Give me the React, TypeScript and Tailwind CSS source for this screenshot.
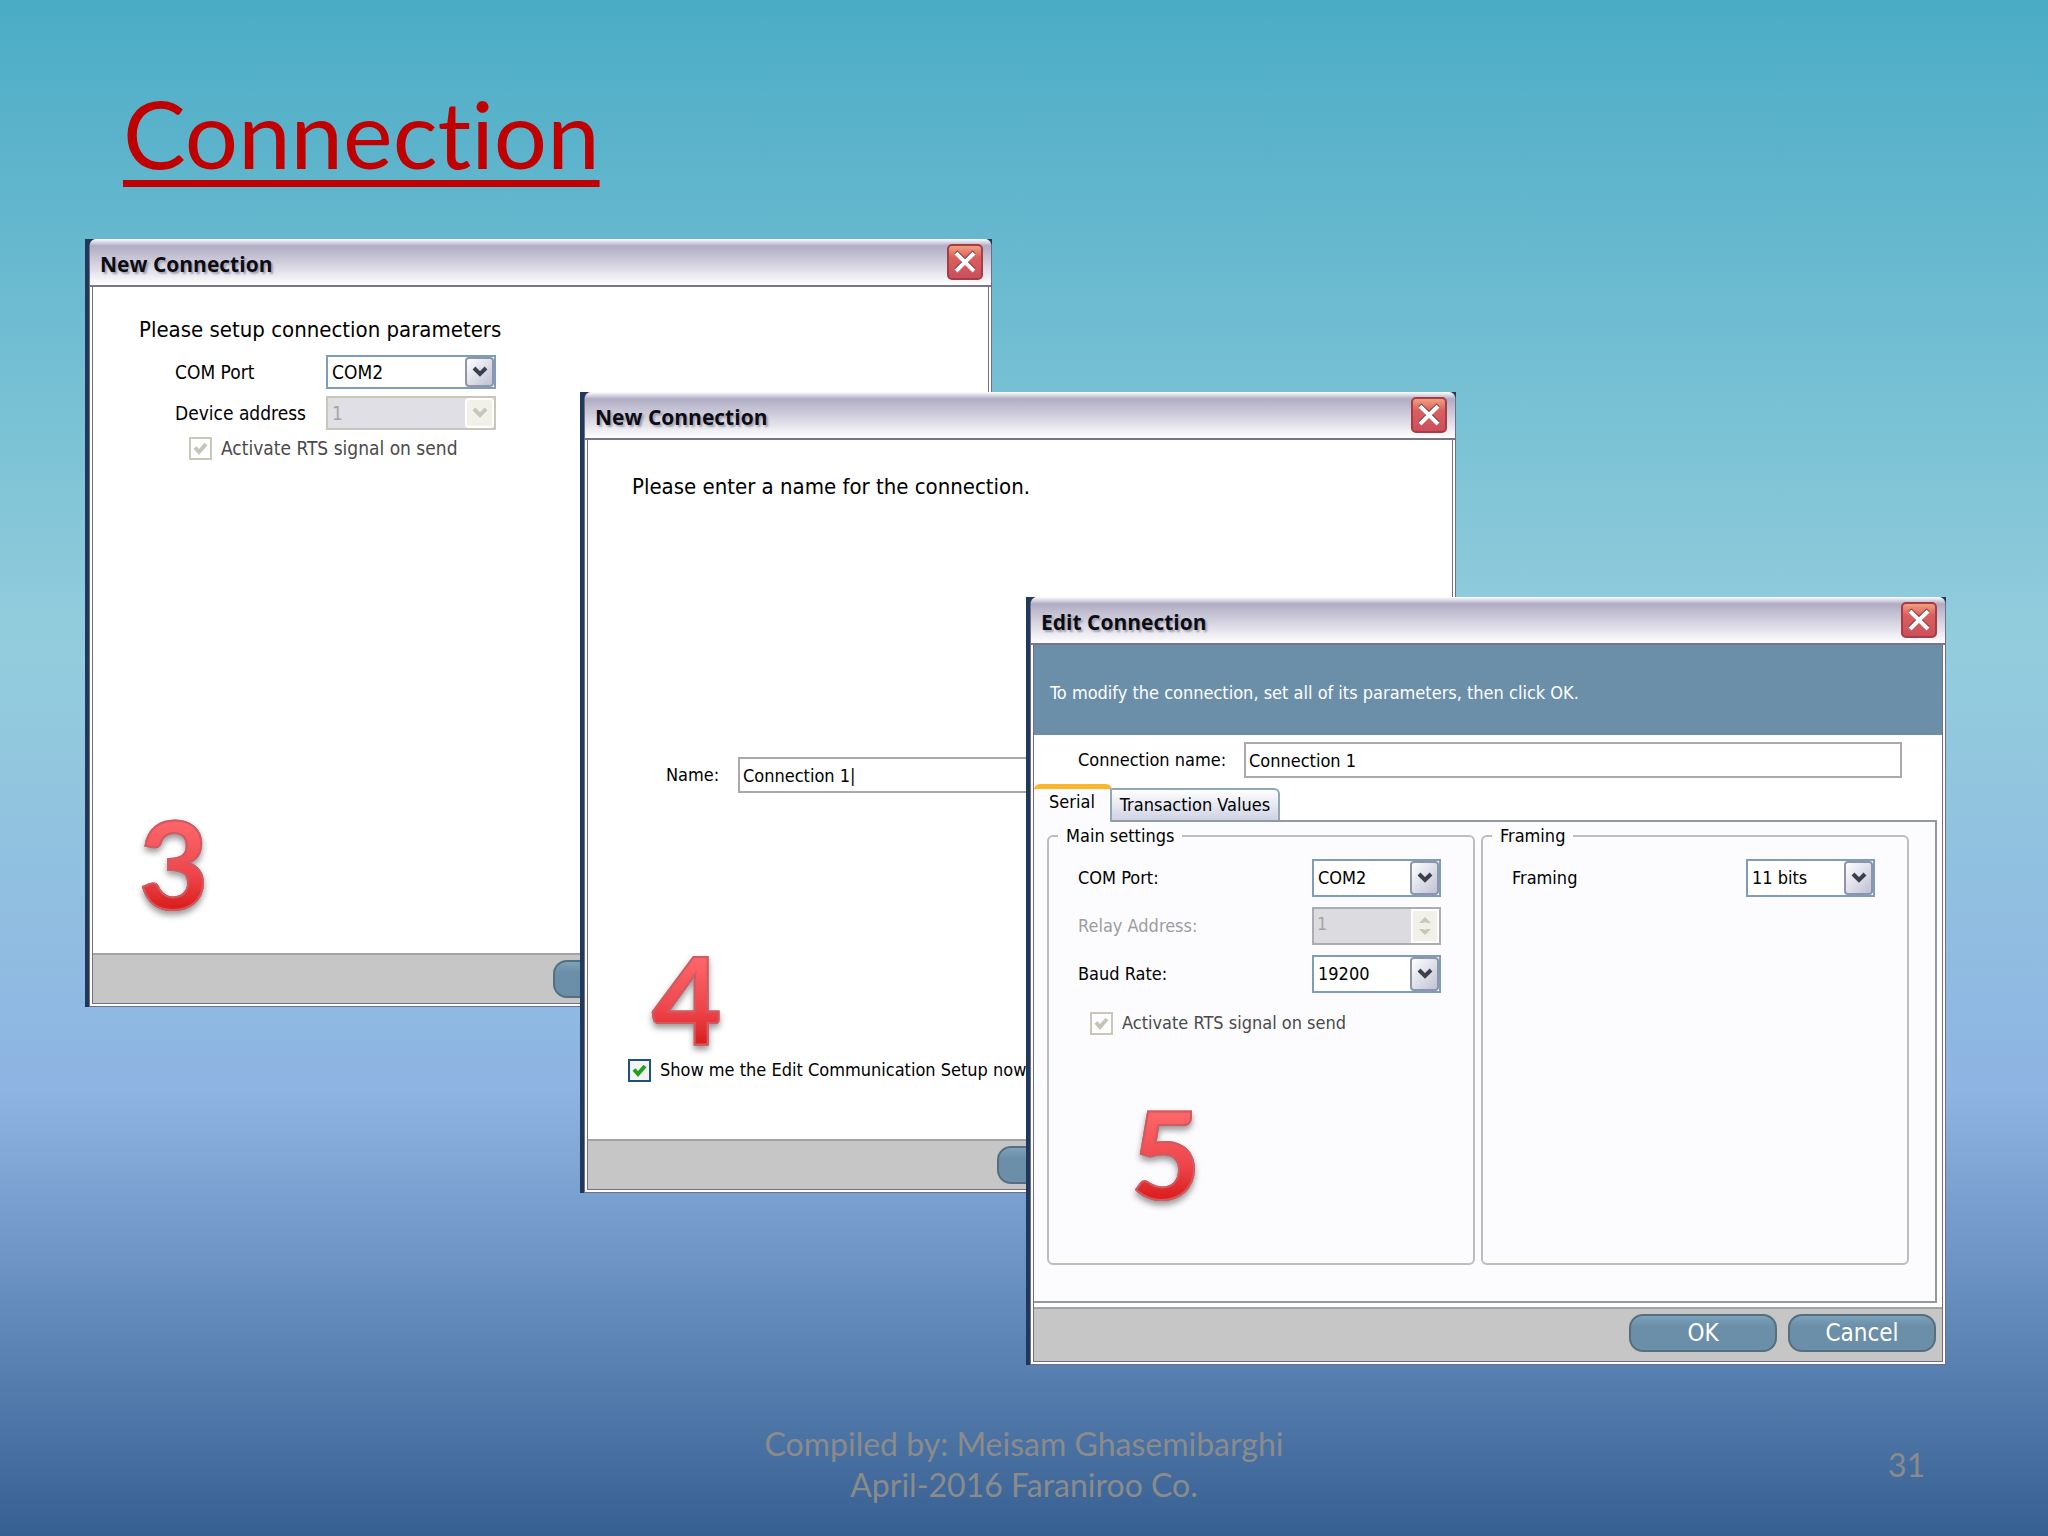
import { useId, type ReactNode } from 'react';
import { clsx } from 'clsx';

interface WindowProps {
  title: string;
  className: string;
  children: ReactNode;
}

function Window({ title, className, children }: WindowProps) {
  return (
    <section
      aria-label={title}
      className={clsx(
        'absolute flex flex-col border-l-4 border-[#20395a] bg-[#20395a] font-[DejaVu_Sans_Condensed,DejaVu_Sans,sans-serif] leading-6 text-black',
        className
      )}
    >
      <div className="flex min-h-0 flex-1 flex-col rounded-t-lg border-x border-b border-[#6f6c8c] bg-white">
        <header className="flex h-12 shrink-0 items-center justify-between rounded-t-md border-b-2 border-[#77748f] bg-linear-to-b from-white via-[#b0adc4] via-15% to-white pr-2 pl-[10px]">
          <h2 className="pt-1 font-[Open_Sans,sans-serif] text-[21px] font-bold text-[#0c0c14] [text-shadow:2px_2px_2px_#a0a0b0]">
            {title}
          </h2>
          <button
            type="button"
            aria-label="Close"
            className="flex size-9 items-center justify-center rounded-[5px] border-2 border-[#a93b47] bg-linear-to-b from-[#f0a080] via-[#d9605f] via-35% to-[#cb4f5c]"
          >
            <svg viewBox="0 0 24 24" className="size-6" fill="none">
              <path d="M3 2 21 20M21 2 3 20" stroke="#5c1a20" strokeWidth="4" />
              <path d="M3 3 21 21M21 3 3 21" stroke="#fff" strokeWidth="4" />
            </svg>
          </button>
        </header>
        <div className="mx-[2px] mb-[2px] flex min-h-0 flex-1 flex-col overflow-hidden border-x border-b border-[#6f6c8c] bg-white">
          {children}
        </div>
      </div>
    </section>
  );
}

interface DropdownProps {
  id: string;
  value: string;
  disabled?: boolean;
  className?: string;
}

function Dropdown({ id, value, disabled, className }: DropdownProps) {
  return (
    <div className={clsx('relative', className)}>
      <select
        id={id}
        defaultValue={value}
        disabled={disabled}
        className={clsx(
          'h-full w-full appearance-none border-2 pl-1 opacity-100',
          disabled
            ? 'border-[#c9c7ba] bg-[#dfdfe5] text-[#a5a5a0]'
            : 'border-[#7f9db9] bg-white text-black'
        )}
      >
        <option>{value}</option>
      </select>
      <span
        className={clsx(
          'pointer-events-none absolute inset-y-[2px] right-[2px] flex w-[29px] items-center justify-center rounded-sm border-2',
          disabled
            ? 'border-white bg-[#f1f1ea]'
            : 'border-[#8f95a8] bg-linear-to-br from-white to-[#bfc2d4]'
        )}
      >
        <svg viewBox="0 0 16 12" className="h-3 w-4" fill="none">
          <path
            d="M2 2 8 8 14 2"
            stroke={disabled ? '#c9c7ba' : '#3c3f4e'}
            strokeWidth="4"
          />
        </svg>
      </span>
    </div>
  );
}

interface CheckFieldProps {
  label: string;
  disabled?: boolean;
  className?: string;
}

function CheckField({ label, disabled, className }: CheckFieldProps) {
  const id = useId();
  return (
    <div className={clsx('flex items-center gap-[9px]', className)}>
      <span className="grid size-[23px] shrink-0">
        <input
          id={id}
          type="checkbox"
          defaultChecked
          disabled={disabled}
          className={clsx(
            'col-start-1 row-start-1 size-[23px] appearance-none border-2',
            disabled ? 'border-[#c9c7ba] bg-white' : 'border-[#1c5180] bg-[#f3f3f0]'
          )}
        />
        <svg
          viewBox="0 0 23 23"
          className="pointer-events-none col-start-1 row-start-1 size-[23px]"
          fill="none"
        >
          <path
            d="M6 10.5 10 15 17 7"
            stroke={disabled ? '#c5c4bb' : '#21a121'}
            strokeWidth="4"
          />
        </svg>
      </span>
      <label
        htmlFor={id}
        className={clsx('whitespace-nowrap', disabled && 'text-[#4a4a4a]')}
      >
        {label}
      </label>
    </div>
  );
}

function StepNumber({ value, className }: { value: number; className?: string }) {
  return (
    <span
      className={clsx(
        'bg-linear-to-b from-[#fb6468] from-20% via-[#ee444a] via-60% to-[#dc2020] to-85% bg-clip-text font-[Lato,sans-serif] text-[120px] leading-[120px] font-bold text-transparent drop-shadow-[0_4px_3px_rgba(0,0,0,0.4)] [-webkit-text-stroke:2px_#cf5a62]',
        className
      )}
    >
      {value}
    </span>
  );
}

function Footer({ children }: { children?: ReactNode }) {
  return (
    <footer className="flex shrink-0 items-start justify-end gap-[11px] border-t-2 border-[#a3a3a3] bg-[#c6c6c6] px-[6px] py-[5px]">
      {children}
    </footer>
  );
}

function ActionButton({ children, className }: { children?: ReactNode; className?: string }) {
  return (
    <button
      type="button"
      className={clsx(
        'h-[38px] w-[148px] rounded-[14px] border-2 border-[#566f7f] bg-linear-to-b from-[#7ba3bb] to-[#6b8fa8] to-30% text-[24px] text-white',
        className
      )}
    >
      {children}
    </button>
  );
}

function PortWindow() {
  return (
    <Window
      title="New Connection"
      className="top-[239px] left-[85px] h-[768px] w-[907px] text-[19px]"
    >
      <div className="flex flex-1 flex-col pt-7 pl-[46px]">
        <p className="text-[22px] leading-[30px]">Please setup connection parameters</p>
        <div className="grid grid-cols-[151px_170px] items-center gap-y-[7px] pt-[10px] pl-9">
          <label htmlFor="port">COM Port</label>
          <Dropdown id="port" value="COM2" className="h-[34px]" />
          <label htmlFor="device">Device address</label>
          <Dropdown id="device" value="1" disabled className="h-[34px]" />
        </div>
        <CheckField label="Activate RTS signal on send" disabled className="pt-[6px] pl-[50px]" />
        <StepNumber value={3} className="mt-auto mb-[30px] self-start" />
      </div>
      <Footer>
        <ActionButton className="mr-[281px]" />
      </Footer>
    </Window>
  );
}

function NameWindow() {
  return (
    <Window
      title="New Connection"
      className="top-[392px] left-[580px] h-[801px] w-[876px] text-[18px]"
    >
      <div className="flex flex-1 flex-col pt-8 pl-10">
        <p className="pl-1 text-[22px] leading-[30px]">Please enter a name for the connection.</p>
        <div className="mt-auto flex items-center pl-[38px]">
          <label htmlFor="name" className="w-[72px]">
            Name:
          </label>
          <div className="grid flex-1 pr-10">
            <input
              id="name"
              type="text"
              defaultValue="Connection 1|"
              className="h-9 w-full border-2 border-[#a9a9ad] bg-white px-[3px]"
            />
          </div>
        </div>
        <StepNumber value={4} className="mt-[145px] ml-6 self-start" />
        <CheckField label="Show me the Edit Communication Setup now" className="mb-[57px]" />
      </div>
      <Footer>
        <ActionButton className="mr-[301px]" />
      </Footer>
    </Window>
  );
}

function Group({ title, children }: { title: string; children: ReactNode }) {
  return (
    <fieldset className="min-w-0 rounded-md border-2 border-[#bdbdbf] pl-[29px]">
      <legend className="-ml-[20px] px-2">{title}</legend>
      {children}
    </fieldset>
  );
}

function EditWindow() {
  return (
    <Window
      title="Edit Connection"
      className="top-[597px] left-[1026px] h-[768px] w-[920px] text-[18px]"
    >
      <p className="flex h-[90px] shrink-0 items-center bg-[#6b8fa9] pt-[6px] pl-4 text-white">
        To modify the connection, set all of its parameters, then click OK.
      </p>
      <div className="flex shrink-0 items-center pt-[7px] pr-10 pl-11">
        <label htmlFor="connection" className="w-[166px]">
          Connection name:
        </label>
        <input
          id="connection"
          type="text"
          defaultValue="Connection 1"
          className="h-9 min-w-0 flex-1 border-2 border-[#a9a9ad] bg-white px-[3px]"
        />
      </div>
      <div role="tablist" className="flex items-end pt-[6px]">
        <button
          type="button"
          role="tab"
          aria-selected="true"
          className="z-10 -mb-[2px] h-[38px] w-[78px] rounded-t-md border-t-[5px] border-r-2 border-t-[#fbb62c] border-r-[#91a7b4] bg-[#fcfcfe] pb-2"
        >
          Serial
        </button>
        <button
          type="button"
          role="tab"
          aria-selected="false"
          className="h-8 w-[168px] rounded-tr-md border-t-2 border-r-2 border-[#91a7b4] bg-linear-to-b from-white to-[#cfd2e4] whitespace-nowrap"
        >
          Transaction Values
        </button>
      </div>
      <div
        role="tabpanel"
        className="mr-[5px] mb-1 grid flex-1 grid-cols-2 gap-[6px] border-t-2 border-r-2 border-b-2 border-[#919b9c] bg-[#fcfcfe] pt-[2px] pr-[26px] pb-9 pl-[13px]"
      >
        <Group title="Main settings">
          <div className="grid grid-cols-[234px_129px] items-center gap-y-[10px] pt-[11px]">
            <label htmlFor="edit-port">COM Port:</label>
            <Dropdown id="edit-port" value="COM2" className="h-[38px]" />
            <label htmlFor="relay" className="text-[#9c9ca0]">
              Relay Address:
            </label>
            <div className="flex h-[38px] border-2 border-[#adadb0] bg-[#dcdce0]">
              <input
                id="relay"
                type="text"
                defaultValue="1"
                disabled
                className="w-0 min-w-0 flex-1 pb-1 pl-[3px] text-[#a5a5a0]"
              />
              <span className="flex w-[28px] items-center justify-center border-2 border-white bg-[#f1f1ea]">
                <svg viewBox="0 0 14 24" className="h-6 w-[14px]" fill="#c9c7ba">
                  <path d="M1 9 7 3 13 9H9L7 8 5 9ZM1 15 7 21 13 15H9L7 16 5 15Z" />
                </svg>
              </span>
            </div>
            <label htmlFor="baud">Baud Rate:</label>
            <Dropdown id="baud" value="19200" className="h-[38px]" />
          </div>
          <CheckField label="Activate RTS signal on send" disabled className="pt-[18px] pl-3" />
          <StepNumber value={5} className="mt-[58px] ml-[53px] block w-fit" />
        </Group>
        <Group title="Framing">
          <div className="grid grid-cols-[234px_129px] items-center pt-[11px]">
            <label htmlFor="framing">Framing</label>
            <Dropdown id="framing" value="11 bits" className="h-[38px]" />
          </div>
        </Group>
      </div>
      <Footer>
        <ActionButton className="mb-1">OK</ActionButton>
        <ActionButton className="mb-1">Cancel</ActionButton>
      </Footer>
    </Window>
  );
}

export default function App() {
  return (
    <main className="relative flex min-h-screen w-full flex-col justify-between overflow-hidden bg-[linear-gradient(to_bottom,#4bacc6,#93cddd_42%,#8eb4e3_71%,#376092)]">
      <h1 className="pt-[77px] pl-[123px] font-[Lato,sans-serif] text-[94px] leading-[112px] text-[#c00000] underline decoration-[7px] underline-offset-[11px] [font-variant-ligatures:none]">
        Connection
      </h1>

      <PortWindow />
      <NameWindow />
      <EditWindow />

      <div className="grid grid-cols-3 items-center px-[123px] pb-[31px] font-[Lato,sans-serif] text-[32px] leading-[41px] text-[#8b8b8b]">
        <p className="col-start-2 text-center whitespace-nowrap">
          Compiled by: Meisam Ghasemibarghi
          <br />
          April-2016 Faraniroo Co.
        </p>
        <p className="text-right">31</p>
      </div>
    </main>
  );
}
